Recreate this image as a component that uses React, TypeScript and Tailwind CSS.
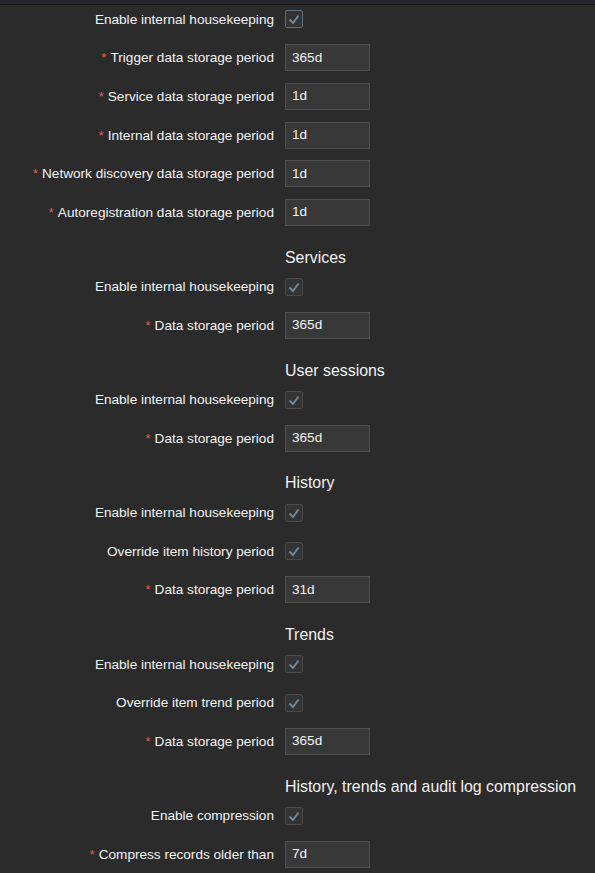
import React from "react";

type Item =
  | { kind: "check"; label: string; focused?: boolean }
  | { kind: "input"; label: string; value: string; required?: boolean }
  | { kind: "heading"; text: string };

const items: Item[] = [
  { kind: "check", label: "Enable internal housekeeping", focused: true },
  { kind: "input", label: "Trigger data storage period", value: "365d", required: true },
  { kind: "input", label: "Service data storage period", value: "1d", required: true },
  { kind: "input", label: "Internal data storage period", value: "1d", required: true },
  { kind: "input", label: "Network discovery data storage period", value: "1d", required: true },
  { kind: "input", label: "Autoregistration data storage period", value: "1d", required: true },
  { kind: "heading", text: "Services" },
  { kind: "check", label: "Enable internal housekeeping" },
  { kind: "input", label: "Data storage period", value: "365d", required: true },
  { kind: "heading", text: "User sessions" },
  { kind: "check", label: "Enable internal housekeeping" },
  { kind: "input", label: "Data storage period", value: "365d", required: true },
  { kind: "heading", text: "History" },
  { kind: "check", label: "Enable internal housekeeping" },
  { kind: "check", label: "Override item history period" },
  { kind: "input", label: "Data storage period", value: "31d", required: true },
  { kind: "heading", text: "Trends" },
  { kind: "check", label: "Enable internal housekeeping" },
  { kind: "check", label: "Override item trend period" },
  { kind: "input", label: "Data storage period", value: "365d", required: true },
  { kind: "heading", text: "History, trends and audit log compression" },
  { kind: "check", label: "Enable compression" },
  { kind: "input", label: "Compress records older than", value: "7d", required: true },
];

function Checkbox({ focused }: { focused?: boolean }) {
  return (
    <div
      className={
        "w-[18px] h-[18px] rounded-[2px] border flex items-center justify-center bg-[#333333] " +
        (focused ? "border-[#5d7284]" : "border-[#4a4a4a]")
      }
    >
      <svg width="16" height="16" viewBox="0 0 16 16" fill="none">
        <polyline
          points="3.5,8.5 7,12 12.5,4.5"
          stroke="#6f8899"
          strokeWidth="2"
          strokeLinecap="butt"
          strokeLinejoin="miter"
        />
      </svg>
    </div>
  );
}

function Row({ item }: { item: Item }) {
  if (item.kind === "heading") {
    return (
      <div className="grid grid-cols-[274px_1fr] gap-x-[11px] h-[35.6px] pt-[15.9px]">
        <div />
        <div className="text-[15.9px] leading-[19px] text-[#f2f2f2] whitespace-nowrap">
          {item.text}
        </div>
      </div>
    );
  }
  return (
    <div className="grid grid-cols-[274px_1fr] gap-x-[11px] h-[38.65px] items-center">
      <div className="text-right text-[13.6px] leading-[16px] pt-[1px] text-[#f2f2f2] whitespace-nowrap">
        {item.kind === "input" && item.required && (
          <span className="text-[#e45959] mr-[4px]">*</span>
        )}
        {item.label}
      </div>
      <div className="flex items-center">
        {item.kind === "check" ? (
          <Checkbox focused={item.focused} />
        ) : (
          <div className="w-[85px] h-[27px] bg-[#383838] border border-[#4f4f4f] pl-[6px] flex items-center text-[13.6px] text-[#f2f2f2]">
            {item.value}
          </div>
        )}
      </div>
    </div>
  );
}

export default function App() {
  return (
    <div
      className="relative w-[595px] h-[873px] overflow-hidden bg-[#2b2b2b]"
      style={{ fontFamily: '"Liberation Sans", Arial, sans-serif' }}
    >
      <div className="absolute top-0 left-0 right-0 h-[5px] bg-[#25252d] border-b border-[#131313] z-10" />
      <div className="flex flex-col">
        {items.map((it, i) => (
          <Row key={i} item={it} />
        ))}
      </div>
    </div>
  );
}
